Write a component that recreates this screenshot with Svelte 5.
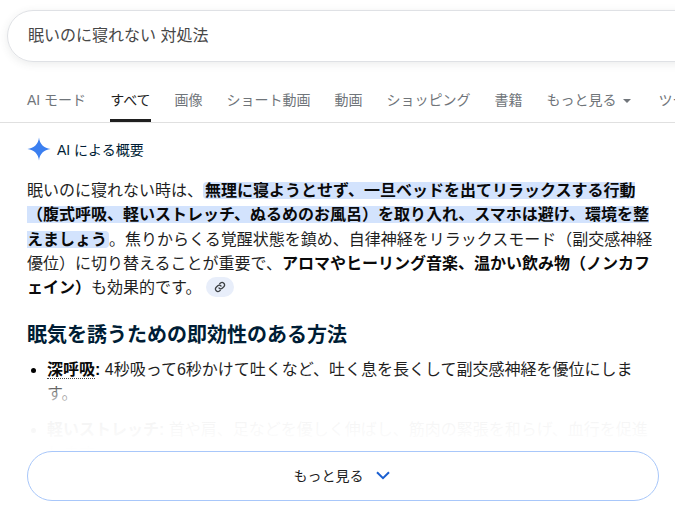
<script>
  const tabs = [
    { label: 'AI モード' },
    { label: 'すべて', active: true },
    { label: '画像' },
    { label: 'ショート動画' },
    { label: '動画' },
    { label: 'ショッピング' },
    { label: '書籍' },
    { label: 'もっと見る', caret: true },
    { label: 'ツール' }
  ];
</script>

<div class="page">
  <header class="head">
    <div class="search"><span>眠いのに寝れない 対処法</span></div>
    <nav class="tabs">
      {#each tabs as t}
        <div class="tab" class:active={t.active}>
          {t.label}
          {#if t.caret}<svg class="caret" width="8" height="4" viewBox="0 0 8 4"><path d="M0 0h8L4 4z" fill="#70757a"/></svg>{/if}
        </div>
      {/each}
    </nav>
  </header>

  <main class="main">
    <div class="ai-title">
      <svg width="24" height="24" viewBox="0 0 24 24">
        <path d="M12 0.5C12.6 7 17 11.4 23.5 12 17 12.6 12.6 17 12 23.5 11.4 17 7 12.6 0.5 12 7 11.4 11.4 7 12 0.5Z" fill="#3b7ff0"/>
      </svg>
      <span>AI による概要</span>
    </div>

    <div class="body">
      <p class="lead">眠いのに寝れない時は、<mark><b>無理に寝ようとせず、一旦ベッドを出てリラックスする行動（腹式呼吸、軽いストレッチ、ぬるめのお風呂）を取り入れ、スマホは避け、環境を整えましょう</b></mark>。焦りからくる覚醒状態を鎮め、自律神経をリラックスモード（副交感神経優位）に切り替えることが重要で、<b>アロマやヒーリング音楽、温かい飲み物（ノンカフェイン）</b>も効果的です。<span class="chip"><svg width="12" height="12" viewBox="0 0 24 24" fill="none" stroke="#3c4043" stroke-width="2.6" stroke-linecap="round"><path d="M10 14a5 5 0 0 0 7 0l3-3a5 5 0 0 0-7-7l-1.5 1.5"/><path d="M14 10a5 5 0 0 0-7 0l-3 3a5 5 0 0 0 7 7l1.5-1.5"/></svg></span></p>

      <h2>眠気を誘うための即効性のある方法</h2>

      <ul>
        <li><b class="term">深呼吸</b><b>:</b> 4秒吸って6秒かけて吐くなど、吐く息を長くして副交感神経を優位にします。</li>
        <li><b>軽いストレッチ:</b> 首や肩、足などを優しく伸ばし、筋肉の緊張を和らげ、血行を促進します。</li>
      </ul>

      <div class="fade"></div>
    </div>

    <button class="more">
      <span>もっと見る</span>
      <svg width="14" height="9" viewBox="0 0 14 9" fill="none"><path d="M1 1.2l6 6 6-6" stroke="#1a5fd0" stroke-width="2"/></svg>
    </button>
  </main>
</div>

<style>
  :global(body) {
    margin: 0;
    background: #fff;
    overflow: hidden;
  }
  .page {
    width: 675px;
    height: 509px;
    overflow: hidden;
    font-family: "Liberation Sans", "Noto Sans CJK JP", sans-serif;
    color: #1f1f1f;
  }
  .head {
    border-bottom: 1px solid #e0e0e0;
    height: 123px;
    box-sizing: border-box;
    padding-top: 10px;
  }
  .search {
    margin-left: 7px;
    width: 720px;
    height: 52px;
    box-sizing: border-box;
    border: 1px solid #dfe1e5;
    border-radius: 26px;
    box-shadow: 0 2px 8px rgba(60, 64, 67, 0.1);
    padding-left: 20px;
    display: flex;
    align-items: center;
    font-size: 16px;
    color: #474747;
    padding-bottom: 4px;
  }
  .tabs {
    display: flex;
    gap: 24px;
    margin-top: 25px;
    padding-left: 27px;
    white-space: nowrap;
    height: 35px;
  }
  .tab {
    font-size: 14px;
    color: #70757a;
    line-height: 26px;
    height: 35px;
    box-sizing: border-box;
    flex: none;
  }
  .tab.active {
    color: #1f1f1f;
    border-bottom: 3px solid #1f1f1f;
  }
  .caret {
    margin: 0 3px 0 3px;
    vertical-align: 2px;
  }
  .main {
    height: 386px;
    padding: 0 27px;
    box-sizing: border-box;
  }
  .ai-title {
    display: flex;
    align-items: center;
    gap: 6px;
    height: 24px;
    margin-top: 14px;
    margin-bottom: 18px;
    font-size: 14px;
    color: #001d35;
  }
  .body {
    position: relative;
    height: 272px;
    overflow: hidden;
    width: 626px;
  }
  .lead {
    margin: 0;
    font-size: 16px;
    line-height: 24.3px;
    color: #1f1f1f;
  }
  .lead b, li b {
    font-weight: 700;
    color: #0a0a0a;
  }
  mark {
    background: #d3e3fd;
    color: inherit;
    border-radius: 4px;
    padding: 0 2px;
  }
  .chip {
    display: inline-flex;
    align-items: center;
    justify-content: center;
    width: 28px;
    height: 20px;
    border-radius: 10px;
    background: #e8eefa;
    margin-left: 5px;
    vertical-align: 0;
  }
  h2 {
    margin: 21px 0 0;
    font-size: 20px;
    line-height: 28px;
    font-weight: 700;
    color: #001d35;
  }
  ul {
    margin: 9px 0 0;
    padding: 0 0 0 20px;
    font-size: 16px;
    line-height: 24px;
  }
  li { margin-bottom: 12px; }
  li::marker { color: #000; }
  .term {
    border-bottom: 1px dotted #444;
  }
  .fade {
    position: absolute;
    left: 0;
    right: 0;
    bottom: 0;
    height: 73px;
    background: linear-gradient(to bottom, rgba(255,255,255,0) 0%, rgba(255,255,255,0.45) 20%, rgba(255,255,255,0.94) 45%, #fff 100%);
  }
  .more {
    width: 632px;
    height: 50px;
    box-sizing: border-box;
    background: #fff;
    border: 1px solid #a8c7fa;
    border-radius: 25px;
    display: flex;
    align-items: center;
    justify-content: center;
    gap: 12px;
    font: inherit;
    font-size: 14px;
    color: #1f1f1f;
    padding: 0 3px 2px 0;
  }
</style>
